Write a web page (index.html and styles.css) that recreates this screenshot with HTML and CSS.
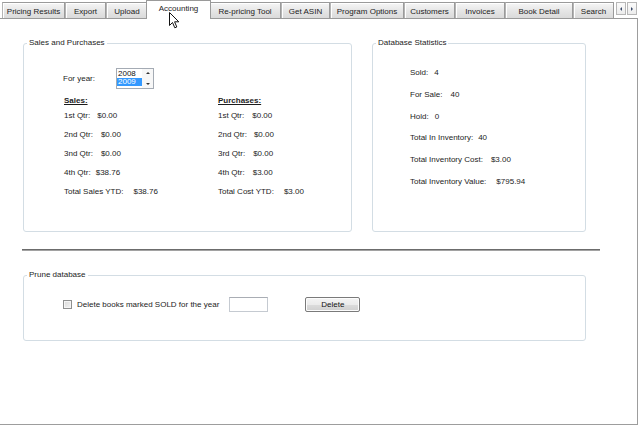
FILE: index.html
```html
<!DOCTYPE html>
<html>
<head>
<meta charset="utf-8">
<link rel="stylesheet" href="styles.css">
</head>
<body>
<div class="window">
  <div class="tabstrip">
    <div class="tab tab-pricing">Pricing Results</div>
    <div class="tab tab-export">Export</div>
    <div class="tab tab-upload">Upload</div>
    <div class="tab tab-accounting active">Accounting</div>
    <div class="tab tab-repricing">Re-pricing Tool</div>
    <div class="tab tab-asin">Get ASIN</div>
    <div class="tab tab-options">Program Options</div>
    <div class="tab tab-customers">Customers</div>
    <div class="tab tab-invoices">Invoices</div>
    <div class="tab tab-detail">Book Detail</div>
    <div class="tab tab-search">Search</div>
    <div class="scroller">
      <span class="sbtn"><span class="arr arr-left"></span></span>
      <span class="sbtn"><span class="arr arr-right"></span></span>
    </div>
  </div>
  <div class="panel">
    <div class="toprow">
      <fieldset class="group sales">
        <legend>Sales and Purchases</legend>
        <div class="sales-body">
          <div class="year-row">
            <span class="year-label">For year:</span>
            <div class="listbox">
              <div class="items">
                <div class="item">2008</div>
                <div class="item sel">2009</div>
              </div>
              <div class="lscroll">
                <span class="tri tri-up"></span>
                <span class="tri tri-down"></span>
              </div>
            </div>
          </div>
          <div class="cols">
            <div class="col col-sales">
              <div class="hdr">Sales:</div>
              <div class="row"><span>1st Qtr:</span><span class="val v-a">$0.00</span></div>
              <div class="row"><span>2nd Qtr:</span><span class="val v-b">$0.00</span></div>
              <div class="row"><span>3nd Qtr:</span><span class="val v-b">$0.00</span></div>
              <div class="row"><span>4th Qtr:</span><span class="val v-c">$38.76</span></div>
              <div class="row"><span>Total Sales YTD:</span><span class="val v-d">$38.76</span></div>
            </div>
            <div class="col col-purch">
              <div class="hdr">Purchases:</div>
              <div class="row"><span>1st Qtr:</span><span class="val v-b">$0.00</span></div>
              <div class="row"><span>2nd Qtr:</span><span class="val v-a">$0.00</span></div>
              <div class="row"><span>3rd Qtr:</span><span class="val v-b">$0.00</span></div>
              <div class="row"><span>4th Qtr:</span><span class="val v-b">$3.00</span></div>
              <div class="row"><span>Total Cost YTD:</span><span class="val v-d">$3.00</span></div>
            </div>
          </div>
        </div>
      </fieldset>
      <fieldset class="group stats">
        <legend>Database Statistics</legend>
        <div class="stats-body">
          <div class="srow"><span>Sold:</span><span class="val s-a">4</span></div>
          <div class="srow"><span>For Sale:</span><span class="val s-b">40</span></div>
          <div class="srow"><span>Hold:</span><span class="val s-a">0</span></div>
          <div class="srow"><span>Total In Inventory:</span><span class="val s-c">40</span></div>
          <div class="srow"><span>Total Inventory Cost:</span><span class="val s-b">$3.00</span></div>
          <div class="srow"><span>Total Inventory Value:</span><span class="val s-d">$795.94</span></div>
        </div>
      </fieldset>
    </div>
    <div class="divider"></div>
    <fieldset class="group prune">
      <legend>Prune database</legend>
      <div class="prune-body">
        <span class="checkbox"></span>
        <span class="check-label">Delete books marked SOLD for the year</span>
        <span class="textbox"></span>
        <span class="button">Delete</span>
      </div>
    </fieldset>
  </div>
  <svg class="cursor" width="12" height="18" viewBox="0 0 12 18">
    <path d="M0.5 0.5 L0.5 13.5 L3.5 10.5 L5.8 15.8 L7.8 15 L5.6 9.8 L9.8 9.8 Z" fill="#fff" stroke="#111" stroke-width="1" stroke-linejoin="round"/>
  </svg>
</div>
</body>
</html>
```
FILE: styles.css
```css
body {
  margin: 0;
  background: #fff;
  font-family: "Liberation Sans", Arial, sans-serif;
  font-size: 8px;
  color: #1c1c1c;
}

.window {
  position: relative;
  width: 638px;
  height: 426px;
  overflow: hidden;
}

/* ---------- tabs ---------- */
.tabstrip {
  display: flex;
  align-items: flex-end;
  height: 18px;
  padding-left: 2px;
}

.tab {
  box-sizing: border-box;
  height: 16px;
  border: 1px solid #9a9a9a;
  border-bottom: none;
  border-left-color: #b4b4b4;
  background: linear-gradient(#f6f6f6, #e6e6e6 50%, #dadada);
  box-shadow: inset 1px 1px 0 #fff;
  display: flex;
  align-items: center;
  justify-content: center;
  white-space: nowrap;
  flex: none;
  padding-top: 1px;
}

.tab-pricing { width: 63px; }
.tab-export { width: 41px; }
.tab-upload { width: 42px; }
.tab-accounting { width: 65px; }
.tab-repricing { width: 72px; }
.tab-asin { width: 49px; }
.tab-options { width: 74px; }
.tab-customers { width: 51px; }
.tab-invoices { width: 50px; }
.tab-detail { width: 68px; }
.tab-search { width: 41px; }

.tab.active {
  height: 19px;
  margin: 0 -2px -1px;
  background: #fff;
  box-shadow: none;
  border-color: #9a9a9a;
  position: relative;
  z-index: 1;
  align-items: flex-start;
  padding-top: 3px;
}

.scroller {
  align-self: flex-start;
  margin: 2px 0 0 2px;
  display: flex;
}

.sbtn {
  box-sizing: border-box;
  width: 10px;
  height: 13px;
  border: 1px solid #b7b7b7;
  background: linear-gradient(#fbfbfb, #ececec);
  display: flex;
  align-items: center;
  justify-content: center;
}

.sbtn + .sbtn { margin-left: 1px; }

.arr {
  width: 0;
  height: 0;
  border-top: 2px solid transparent;
  border-bottom: 2px solid transparent;
}
.arr-left { border-right: 2px solid #3a4a6a; }
.arr-right { border-left: 2px solid #3a4a6a; }

/* ---------- panel ---------- */
.panel {
  box-sizing: border-box;
  height: 407px;
  border-top: 1px solid #9a9a9a;
  border-right: 1px solid #9d9d9d;
  border-bottom: 1px solid #9d9d9d;
  padding: 19px 0 0 23px;
}

.toprow {
  display: flex;
  gap: 20px;
  align-items: flex-start;
}

fieldset.group {
  margin: 0;
  padding: 0;
  min-width: 0;
  box-sizing: border-box;
  border: 1px solid #d3dde4;
  border-radius: 3px;
}

fieldset.group legend {
  margin-left: 3px;
  padding: 0 2px;
  line-height: 10px;
}

fieldset.sales { width: 329px; height: 194px; }
fieldset.stats { width: 214px; height: 194px; }

.sales-body {
  padding: 20px 0 0 39px;
}

.year-row {
  display: flex;
  align-items: center;
}

.year-label {
  width: 53px;
}

.listbox {
  box-sizing: border-box;
  width: 38px;
  height: 21px;
  border: 1px solid #a4abb4;
  display: flex;
  background: #fff;
}

.items {
  flex: 1;
  padding-top: 1px;
}

.item {
  height: 8px;
  line-height: 8px;
  padding-left: 1px;
  color: #111;
}

.item.sel {
  background: #3399ff;
  color: #fff;
}

.lscroll {
  width: 11px;
  display: flex;
  flex-direction: column;
  justify-content: space-between;
  align-items: center;
  padding: 3px 0 3px;
  box-sizing: border-box;
  background: #f7f7f7;
}

.tri {
  width: 0;
  height: 0;
  border-left: 2px solid transparent;
  border-right: 2px solid transparent;
}
.tri-up { border-bottom: 2px solid #333; }
.tri-down { border-top: 2px solid #333; }

.cols {
  display: flex;
  margin-top: 6px;
  padding-left: 1px;
}

.col-sales { width: 154px; }

.hdr {
  line-height: 11px;
  font-weight: bold;
  text-decoration: underline;
}

.row {
  line-height: 19px;
  display: flex;
  white-space: nowrap;
}

.v-a { margin-left: 7px; }
.v-b { margin-left: 8px; }
.v-c { margin-left: 5px; }
.v-d { margin-left: 10px; }

.stats-body {
  padding: 14px 0 0 37px;
}

.srow {
  line-height: 21.8px;
  display: flex;
  white-space: nowrap;
}

.s-a { margin-left: 6px; }
.s-b { margin-left: 8px; }
.s-c { margin-left: 5px; }
.s-d { margin-left: 10px; }

.divider {
  box-sizing: border-box;
  width: 578px;
  height: 2px;
  margin: 17px 0 0 -1px;
  border-top: 1px solid #6c6c6c;
  border-bottom: 1px solid #a2a2a2;
}

fieldset.prune {
  width: 563px;
  height: 71px;
  margin-top: 19px;
}

.prune-body {
  display: flex;
  align-items: center;
  padding: 17px 0 0 39px;
  height: 15px;
}

.checkbox {
  box-sizing: border-box;
  width: 9px;
  height: 9px;
  border: 1px solid #8e8f8f;
  background: linear-gradient(135deg, #d9d9d9, #f2f2f2);
  box-shadow: inset 0 0 0 1px #f4f4f4;
}

.check-label {
  margin-left: 5px;
  white-space: nowrap;
}

.textbox {
  box-sizing: border-box;
  width: 39px;
  height: 15px;
  margin-left: 10px;
  border: 1px solid #c5cad1;
  border-top-color: #a9adb4;
  background: #fff;
}

.button {
  box-sizing: border-box;
  width: 55px;
  height: 15px;
  margin-left: 37px;
  border: 1px solid #7a7a7a;
  border-radius: 2px;
  background: linear-gradient(#f4f4f4, #ebebeb 50%, #dcdcdc 51%, #cfcfcf);
  box-shadow: inset 0 0 0 1px #fcfcfc;
  display: flex;
  align-items: center;
  justify-content: center;
  color: #111;
}

/* ---------- mouse pointer overlay ---------- */
.cursor {
  position: absolute;
  left: 169px;
  top: 12px;
  z-index: 5;
}
```
